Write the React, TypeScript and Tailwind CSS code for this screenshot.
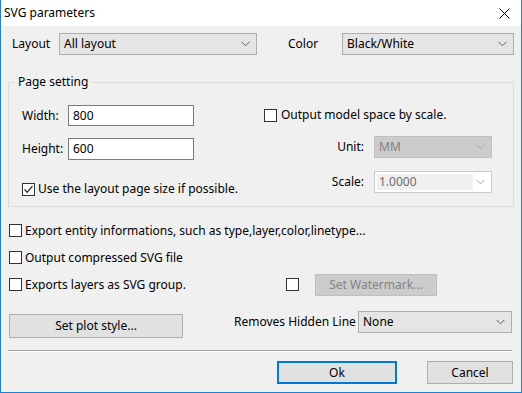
import React from "react";

const Chevron = ({ color = "#606060" }: { color?: string }) => (
  <svg width="9" height="6" viewBox="0 0 9 6" className="shrink-0">
    <path d="M0.5 0.8 L4.5 4.8 L8.5 0.8" fill="none" stroke={color} strokeWidth="1" />
  </svg>
);

const Check = ({ checked = false }: { checked?: boolean }) => (
  <div className="w-[13px] h-[13px] border border-[#333333] bg-white shrink-0 flex items-center justify-center">
    {checked && (
      <svg width="11" height="11" viewBox="0 0 11 11">
        <path d="M1.5 5.5 L4.2 8.3 L9.5 2" fill="none" stroke="#333" strokeWidth="1.3" />
      </svg>
    )}
  </div>
);

const Combo = ({ text, w }: { text: string; w: string }) => (
  <div className={`${w} h-[22px] bg-[#e5e5e5] border border-[#adadad] flex items-center justify-between pl-[4px] pr-[6px]`}>
    <span>{text}</span>
    <Chevron />
  </div>
);

export default function App() {
  return (
    <div
      className="w-[522px] h-[393px] bg-[#f0f0f0] border-l border-r border-b border-[#1883d7] flex flex-col text-[12px] text-black leading-[16px] overflow-hidden"
      style={{ fontFamily: '"Noto Sans", "Open Sans", sans-serif' }}
    >
      {/* Title bar */}
      <div className="h-[26px] bg-white flex items-center justify-between pl-[3px] pr-[11px] shrink-0">
        <span>SVG parameters</span>
        <svg width="11" height="11" viewBox="0 0 11 11">
          <path d="M0.5 0.5 L10.5 10.5 M10.5 0.5 L0.5 10.5" stroke="#000" strokeWidth="1" />
        </svg>
      </div>

      {/* Row 1 */}
      <div className="flex items-center h-[22px] mt-[7px]">
        <span className="ml-[11px] w-[47px]">Layout</span>
        <Combo text="All layout" w="w-[198px]" />
        <span className="ml-[31px] w-[54px]">Color</span>
        <Combo text="Black/White" w="w-[172px]" />
      </div>

      {/* Group box */}
      <div className="relative ml-[7px] mt-[27px] w-[506px] h-[125px] border border-[#dcdcdc] flex shrink-0">
        <span className="absolute -top-[9px] left-[6px] px-[3px] bg-[#f0f0f0]">Page setting</span>
        <div className="flex flex-col pt-[22px] pl-[13px] w-[254px]">
          <div className="flex items-center h-[21px]">
            <span className="w-[46px]">Width:</span>
            <div className="w-[126px] h-[21px] bg-white border border-[#7a7a7a] flex items-center pl-[4px]">800</div>
          </div>
          <div className="flex items-center h-[21px] mt-[12px]">
            <span className="w-[46px]">Height:</span>
            <div className="w-[126px] h-[22px] bg-white border border-[#7a7a7a] flex items-center pl-[4px]">600</div>
          </div>
          <div className="flex items-center gap-[3px] mt-[22px]">
            <Check checked />
            <span>Use the layout page size if possible.</span>
          </div>
        </div>
        <div className="flex flex-col pt-[24px] pl-[1px]">
          <div className="flex items-center gap-[4px]">
            <Check />
            <span>Output model space by scale.</span>
          </div>
          <div className="flex items-center mt-[13px]">
            <span className="w-[110px] text-right pr-[10px]">Unit:</span>
            <div className="w-[118px] h-[22px] bg-[#cccccc] border border-[#bfbfbf] flex items-center justify-between pl-[4px] pr-[6px] text-[#838383]">
              <span>MM</span>
              <Chevron color="#a0a0a0" />
            </div>
          </div>
          <div className="flex items-center mt-[13px]">
            <span className="w-[110px] text-right pr-[10px]">Scale:</span>
            <div className="w-[118px] h-[22px] bg-white border border-[#cccccc] flex items-center justify-between p-[2px] pr-[6px] text-[#6d6d6d]">
              <span className="bg-[#f0f0f0] w-[96px] h-full flex items-center pl-[2px]">1.0000</span>
              <Chevron color="#a0a0a0" />
            </div>
          </div>
        </div>
      </div>

      {/* Checkboxes */}
      <div className="flex flex-col mt-[10px] pl-[8px]">
        <div className="h-[27px] flex items-center gap-[3px]">
          <Check />
          <span>Export entity informations, such as type,layer,color,linetype...</span>
        </div>
        <div className="h-[27px] flex items-center gap-[3px]">
          <Check />
          <span>Output compressed SVG file</span>
        </div>
        <div className="h-[27px] flex items-center">
          <div className="flex items-center gap-[3px] w-[277px]">
            <Check />
            <span>Exports layers as SVG group.</span>
          </div>
          <Check />
          <div className="ml-[16px] w-[122px] h-[22px] bg-[#cccccc] border border-[#bfbfbf] flex items-center justify-center text-[#838383]">
            Set Watermark...
          </div>
        </div>
      </div>

      {/* Plot style row */}
      <div className="flex items-start mt-[13px] h-[27px]">
        <div className="ml-[8px] mt-[3px] w-[174px] h-[24px] bg-[#e1e1e1] border border-[#adadad] flex items-center justify-center">
          Set plot style...
        </div>
        <span className="ml-[51px] mt-[3px] w-[124px]">Removes Hidden Line</span>
        <Combo text="None" w="w-[154px]" />
      </div>

      {/* Separator */}
      <div className="ml-[7px] mt-[12px] w-[504px] h-[2px] border-t border-[#a0a0a0] border-b border-b-white" />

      {/* Buttons */}
      <div className="flex mt-[9px]">
        <div className="ml-[276px] w-[120px] h-[23px] bg-[#e1e1e1] border-2 border-[#0078d7] flex items-center justify-center">
          Ok
        </div>
        <div className="ml-[30px] w-[86px] h-[23px] bg-[#e1e1e1] border border-[#adadad] flex items-center justify-center">
          Cancel
        </div>
      </div>
    </div>
  );
}
